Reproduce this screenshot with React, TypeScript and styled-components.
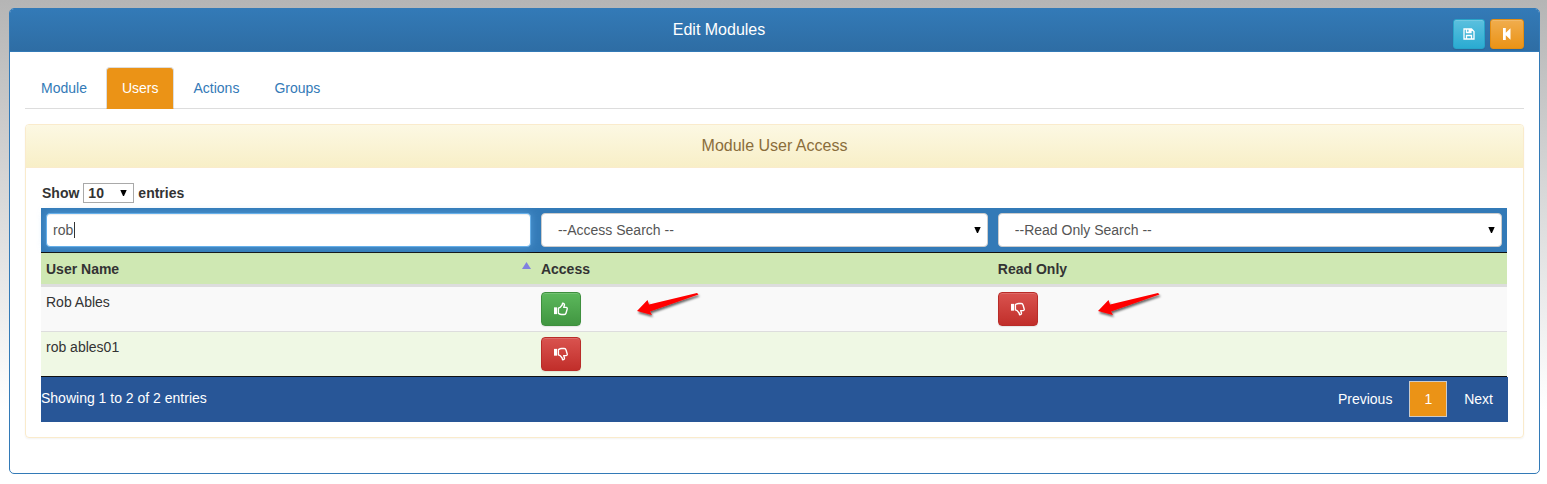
import React from "react";
import styled, { createGlobalStyle } from "styled-components";

const GlobalStyle = createGlobalStyle`
  *, *::before, *::after { box-sizing: border-box; }
  body {
    margin: 0;
    background: #fff linear-gradient(to bottom, #b5b5b5 0, #fff 410px) no-repeat;
    font-family: Arial, "Liberation Sans", sans-serif;
    font-size: 14px;
    line-height: 20px;
    color: #333;
  }
  button, input, select { font: inherit; }
`;

const Panel = styled.main`
  margin: 8px 7px 10px 9px;
  border: 1px solid #337ab7;
  border-radius: 5px;
  background: #fff;
`;

const PanelHeader = styled.header`
  display: grid;
  grid-template-columns: 1fr 111px;
  align-items: start;
  height: 43px;
  padding: 10px 15px 0;
  border-bottom: 1px solid #337ab7;
  border-radius: 4px 4px 0 0;
  background: linear-gradient(to bottom, #337ab7, #2e6da4);
`;

const PanelTitle = styled.h1`
  margin: 0;
  font-size: 16px;
  font-weight: 400;
  line-height: 22px;
  text-align: center;
  color: #fff;
`;

const HeaderTools = styled.div`
  display: flex;
  justify-content: flex-end;
  gap: 5px;
`;

const PanelBody = styled.div`
  padding: 15px 15px 35px;
`;

const tones = {
  info: ["#5bc0de", "#2aabd2", "#28a4c9"],
  warning: ["#f0ad4e", "#eb9316", "#e38d13"],
  success: ["#5cb85c", "#419641", "#3e8f3e"],
  danger: ["#d9534f", "#c12e2a", "#b92c28"],
};
type Tone = keyof typeof tones;

const IconButton = styled.button<{ $tone: Tone; $small?: boolean }>`
  display: inline-flex;
  align-items: center;
  justify-content: center;
  height: ${(p) => (p.$small ? 30 : 34)}px;
  padding: 0 ${(p) => (p.$small ? 9 : 12)}px;
  border: 1px solid ${(p) => tones[p.$tone][2]};
  border-radius: ${(p) => (p.$small ? 3 : 4)}px;
  background: linear-gradient(
    to bottom,
    ${(p) => tones[p.$tone][0]},
    ${(p) => tones[p.$tone][1]}
  );
  box-shadow: inset 0 1px 0 rgba(255, 255, 255, 0.15), 0 1px 1px rgba(0, 0, 0, 0.08);
  color: #fff;
  cursor: pointer;
`;

const TabBar = styled.nav`
  display: flex;
  gap: 3px;
  border-bottom: 1px solid #ddd;
`;

const Tab = styled.a<{ $active?: boolean }>`
  margin-bottom: -1px;
  padding: 10px 15px;
  border: 1px solid ${(p) => (p.$active ? "#ddd" : "transparent")};
  border-bottom-color: ${(p) => (p.$active ? "#eb9316" : "transparent")};
  border-radius: 4px 4px 0 0;
  background: ${(p) => (p.$active ? "#eb9316" : "transparent")};
  color: ${(p) => (p.$active ? "#fff" : "#337ab7")};
  text-decoration: none;
`;

const Card = styled.section`
  margin-top: 15px;
  border: 1px solid #faebcc;
  border-radius: 4px;
  box-shadow: 0 1px 2px rgba(0, 0, 0, 0.05);
`;

const CardTitle = styled.h2`
  margin: 0;
  padding: 11px 15px;
  border-bottom: 1px solid #faebcc;
  border-radius: 3px 3px 0 0;
  background: linear-gradient(to bottom, #fcf8e3, #f8efc7);
  color: #8a6d3b;
  font-size: 16px;
  font-weight: 400;
  line-height: 20px;
  text-align: center;
`;

const CardBody = styled.div`
  padding: 15px;
`;

const LengthLabel = styled.label`
  display: flex;
  align-items: center;
  gap: 4px;
  height: 20px;
  margin: 0 0 5px 1px;
  font-weight: 700;
`;

const SelectBox = styled.span`
  display: grid;
  grid-template-columns: 1fr auto;
  align-items: center;
  & > * { grid-row: 1; }
  & > select { grid-column: 1 / -1; }
  & > svg {
    grid-column: 2;
    margin-right: 7px;
    pointer-events: none;
  }
`;

const LengthSelect = styled.select`
  appearance: none;
  width: 51px;
  height: 20px;
  padding: 0 4px;
  border: 1px solid #a9a9a9;
  border-radius: 0;
  background: #fff;
  color: #333;
  line-height: 18px;
`;

const FilterSelect = styled.select`
  appearance: none;
  width: 100%;
  height: 34px;
  padding: 0 16px;
  border: 1px solid #ccc;
  border-radius: 4px;
  background: #fff;
  color: #555;
`;

const InputBox = styled.span`
  position: relative;
  display: block;
`;

const FilterInput = styled.input`
  display: block;
  width: 100%;
  height: 34px;
  padding: 0 6px;
  border: 1px solid #66afe9;
  border-radius: 4px;
  outline: 0;
  background: #fff;
  box-shadow: inset 0 1px 1px rgba(0, 0, 0, 0.075), 0 0 8px rgba(102, 175, 233, 0.6);
  color: #555;
  caret-color: transparent;
`;

const TextCursor = styled.span`
  position: absolute;
  top: 9px;
  left: 28px;
  width: 1px;
  height: 16px;
  background: #333;
  pointer-events: none;
`;

const Table = styled.table`
  width: calc(100% - 1px);
  table-layout: fixed;
  border-collapse: separate;
  border-spacing: 0;
  border-bottom: 1px solid #111;
`;

const Column = styled.col<{ $share?: number }>`
  width: ${(p) => (p.$share ? `${p.$share}%` : "auto")};
`;

const FilterCell = styled.th`
  height: 45px;
  padding: 5px;
  border-bottom: 1px solid #111;
  background: #337ab7;
  vertical-align: top;
  font-weight: 400;
  text-align: left;
`;

const HeadCell = styled.th`
  height: 34px;
  padding: 6px 5px 5px;
  border-bottom: 3px solid #ddd;
  background: #cfe8b3;
  text-align: left;
  vertical-align: top;
`;

const HeadLabel = styled.span`
  display: flex;
  justify-content: space-between;
  align-items: flex-start;
  & > svg { margin-top: 3px; }
`;

const Cell = styled.td<{ $alt?: boolean; $line?: boolean }>`
  height: ${(p) => (p.$line ? 45 : 44)}px;
  padding: 5px;
  border-bottom: ${(p) => (p.$line ? "1px solid #ddd" : "0")};
  background: ${(p) => (p.$alt ? "#eff8e4" : "#f9f9f9")};
  vertical-align: top;
`;

const TableFooter = styled.footer`
  display: flex;
  justify-content: space-between;
  padding: 4px 0 5px;
  background: #285697;
  color: #fff;
`;

const Info = styled.p`
  margin: 7px 0 0;
`;

const Pager = styled.nav`
  display: flex;
  gap: 2px;
`;

const PageButton = styled.button<{ $current?: boolean }>`
  height: 36px;
  padding: 0 14px;
  border: 1px solid ${(p) => (p.$current ? "#cacaca" : "transparent")};
  background: ${(p) => (p.$current ? "#eb9316" : "transparent")};
  color: #fff;
  cursor: pointer;
`;

const Marked = styled.div<{ $gap?: number }>`
  display: flex;
  align-items: flex-start;
  gap: ${(p) => p.$gap ?? 0}px;
`;

const Arrow = styled.svg`
  display: block;
  flex: none;
  overflow: visible;
`;

const Caret = () => (
  <svg width="7" height="6" viewBox="0 0 7 6" aria-hidden="true">
    <path d="M.3 0h6.400L4 6H3z" fill="#000" />
  </svg>
);

const Thumb = ({ down }: { down?: boolean }) => (
  <svg width="14" height="14" viewBox="0 0 15 14" aria-hidden="true">
    <g transform={down ? "matrix(1 0 0 -1 0 14)" : undefined}>
      <path d="M0 5.200h3.200v7.300H0z" fill="#fff" />
      <path
        d="M4.700 6 6.600 5.300 8.700 2.700 9.200.9Q11.300.8 11.200 2.700L10.400 5.300H13.100Q14.500 5.600 14.100 7.100L12.900 11.300Q12.500 12.900 11 12.900H8.200Q6.600 12.900 4.700 11.700z"
        fill="none"
        stroke="#fff"
        strokeWidth="1.500"
        strokeLinejoin="round"
      />
    </g>
  </svg>
);

const Access = ({ granted, label }: { granted?: boolean; label: string }) => (
  <IconButton type="button" $tone={granted ? "success" : "danger"} aria-label={label}>
    <Thumb down={!granted} />
  </IconButton>
);

const RedArrow = () => (
  <Arrow width="64" height="26" viewBox="0 0 64 26" aria-hidden="true">
    <defs>
      <filter id="arrowShadow" x="-20%" y="-30%" width="150%" height="190%">
        <feDropShadow dx="1" dy="2" stdDeviation="1.2" floodColor="#000" floodOpacity="0.6" />
      </filter>
    </defs>
    <path
      d="M2 19 12.500 8 14 12.500 62 1 63.500 2.500 15 19.500 17 23z"
      fill="#f00"
      filter="url(#arrowShadow)"
    />
  </Arrow>
);

const SaveIcon = () => (
  <svg width="12" height="12" viewBox="0 0 12 12" aria-hidden="true">
    <path
      d="M1 1h7.500L11 3.500V11H1zM3.500 1v3.500H8V1M3.500 11V7.500h5V11"
      fill="none"
      stroke="#fff"
      strokeWidth="1.300"
    />
    <path d="M5.500 1H8v3H5.500z" fill="#fff" />
  </svg>
);

const BackIcon = () => (
  <svg width="14" height="12" viewBox="0 0 14 12" aria-hidden="true">
    <path d="M3 0h2.800v4.800L10.500.3v11.400L5.800 7.200V12H3z" fill="#fff" />
  </svg>
);

export default function App() {
  return (
    <>
      <GlobalStyle />
      <Panel>
        <PanelHeader>
          <PanelTitle>Edit Modules</PanelTitle>
          <HeaderTools>
            <IconButton type="button" $tone="info" $small aria-label="Save">
              <SaveIcon />
            </IconButton>
            <IconButton type="button" $tone="warning" $small aria-label="Back">
              <BackIcon />
            </IconButton>
          </HeaderTools>
        </PanelHeader>
        <PanelBody>
          <TabBar>
            <Tab href="#module">Module</Tab>
            <Tab href="#users" $active aria-current="page">Users</Tab>
            <Tab href="#actions">Actions</Tab>
            <Tab href="#groups">Groups</Tab>
          </TabBar>
          <Card>
            <CardTitle>Module User Access</CardTitle>
            <CardBody>
              <LengthLabel>
                Show
                <SelectBox>
                  <LengthSelect defaultValue="10">
                    <option>10</option>
                    <option>25</option>
                    <option>50</option>
                  </LengthSelect>
                  <Caret />
                </SelectBox>
                entries
              </LengthLabel>
              <Table>
                <colgroup>
                  <Column $share={33.76} />
                  <Column $share={31.17} />
                  <Column />
                </colgroup>
                <thead>
                  <tr>
                    <FilterCell>
                      <InputBox>
                        <FilterInput aria-label="User name search" defaultValue="rob" />
                        <TextCursor />
                      </InputBox>
                    </FilterCell>
                    <FilterCell>
                      <SelectBox>
                        <FilterSelect aria-label="Access search">
                          <option>--Access Search --</option>
                        </FilterSelect>
                        <Caret />
                      </SelectBox>
                    </FilterCell>
                    <FilterCell>
                      <SelectBox>
                        <FilterSelect aria-label="Read only search">
                          <option>--Read Only Search --</option>
                        </FilterSelect>
                        <Caret />
                      </SelectBox>
                    </FilterCell>
                  </tr>
                  <tr>
                    <HeadCell scope="col" aria-sort="ascending">
                      <HeadLabel>
                        User Name
                        <svg width="9" height="7" viewBox="0 0 9 7" aria-hidden="true">
                          <path d="M4.500 0 9 7H0z" fill="#8080e0" />
                        </svg>
                      </HeadLabel>
                    </HeadCell>
                    <HeadCell scope="col">Access</HeadCell>
                    <HeadCell scope="col">Read Only</HeadCell>
                  </tr>
                </thead>
                <tbody>
                  <tr>
                    <Cell $line>Rob Ables</Cell>
                    <Cell $line>
                      <Marked $gap={54}>
                        <Access granted label="Revoke access for Rob Ables" />
                        <RedArrow />
                      </Marked>
                    </Cell>
                    <Cell $line>
                      <Marked $gap={58}>
                        <Access label="Make Rob Ables read only" />
                        <RedArrow />
                      </Marked>
                    </Cell>
                  </tr>
                  <tr>
                    <Cell $alt>rob ables01</Cell>
                    <Cell $alt>
                      <Marked>
                        <Access label="Grant access to rob ables01" />
                      </Marked>
                    </Cell>
                    <Cell $alt />
                  </tr>
                </tbody>
              </Table>
              <TableFooter>
                <Info>Showing 1 to 2 of 2 entries</Info>
                <Pager aria-label="Table pages">
                  <PageButton type="button">Previous</PageButton>
                  <PageButton type="button" $current aria-current="page">1</PageButton>
                  <PageButton type="button">Next</PageButton>
                </Pager>
              </TableFooter>
            </CardBody>
          </Card>
        </PanelBody>
      </Panel>
    </>
  );
}
